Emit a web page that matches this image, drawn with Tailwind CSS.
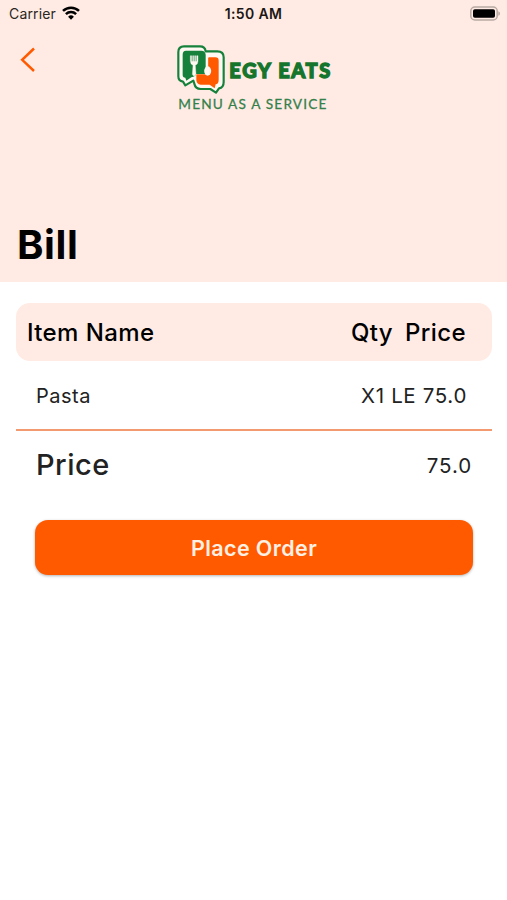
<!DOCTYPE html>
<html lang="en">
<head>
<meta charset="utf-8">
<meta name="viewport" content="width=device-width, initial-scale=1">
<title>Bill</title>
<script src="https://cdn.jsdelivr.net/npm/@tailwindcss/browser@4"></script>
</head>
<body class="h-[900px] overflow-hidden bg-white font-['Inter',sans-serif] text-black">
<header class="flex h-[282px] flex-col bg-[#ffebe4]">
  <div class="grid h-7 grid-cols-3 items-center pr-[6px] pl-[9px]">
    <div class="-mt-[1px] flex items-center gap-[6px] text-[14px] tracking-[0.15px] text-[#2b2522]">
      <span>Carrier</span>
      <svg class="-mt-[1px]" width="18" height="14" viewBox="0 0 18 14" fill="none" stroke="#000" stroke-width="2.5">
        <path d="M1 4.9a11.5 11.5 0 0 1 16 0M3.9 8.2a7.3 7.3 0 0 1 10.2 0"/>
        <path d="M9 13.7 6.1 10.8a4.1 4.1 0 0 1 5.8 0Z" fill="#000" stroke="none"/>
      </svg>
    </div>
    <div class="-mt-[2px] -ml-[3px] text-center text-[14px] font-semibold tracking-[0.35px] text-[#1c1715]">1:50 AM</div>
    <svg class="-mt-[2px] justify-self-end" width="31" height="15" viewBox="0 0 31 15">
      <rect x=".8" y="1" width="26.4" height="13" rx="4" fill="#ffebe4" stroke="#b9aaa4" stroke-width="1.5"/>
      <rect x="3" y="3.2" width="22" height="8.6" rx="1.8" fill="#000"/>
      <path d="M28.3 5.2c2.2.8 2.2 3.8 0 4.6Z" fill="#b9aaa4"/>
    </svg>
  </div>
  <div class="grid grid-cols-[173px_161px_173px] items-start pt-4">
    <svg class="mt-[3px] ml-[20px]" width="16" height="26" viewBox="0 0 16 26" fill="none" stroke="#ff5a00" stroke-width="2.5"><path d="M14 1.5 2.2 12.8 14 24"/></svg>
    <svg width="161" height="72" viewBox="9 18 483 216">
      <path d="M42 25H90Q105 25 107 40H142Q161 40 161 58V132Q161 149 147 151L138 164L121 153H92Q76 152 73 137L70 128L46 142L39 131Q25 129 25 115V42Q25 25 42 25Z" fill="#fff8f3" stroke="#16813b" stroke-width="6.5" stroke-linejoin="round"/>
      <path d="M48 38H94Q106 38 107 50V108H79Q77 115 64 118L49 128L46 119Q38 119 38 110V50Q38 38 48 38Z" fill="#16813b"/>
      <path d="M118 58H136Q146 58 146 68V125Q146 138 137 139L134 151L119 140H92Q80 139 79 127V109H111V60Z" fill="#ff5a00"/>
      <path d="M112 54V92" stroke="#fff8f3" stroke-width="5"/>
      <path d="M61 53V70Q61 79 69 82L67 109Q72 119 78 109L76 82Q84 79 84 70V53H80V70H77V53H74V70H71V53H68V70H65V53Z" fill="#fff8f3" stroke="#fff8f3" stroke-width="1"/>
      <ellipse cx="113" cy="99" rx="10.5" ry="14" fill="#fff8f3"/>
      <text x="178" y="121" textLength="303" lengthAdjust="spacing" font-family="Lato, sans-serif" font-size="60" font-weight="900" fill="#16752c" stroke="#16752c" stroke-width="4">EGY EATS</text>
      <text x="25" y="214" textLength="444" lengthAdjust="spacing" font-family="Lato, sans-serif" font-size="41" fill="#34804a" stroke="#34804a" stroke-width=".8">MENU AS A SERVICE</text>
    </svg>
  </div>
  <h1 class="mt-auto mb-[13px] ml-[17px] text-[40px] leading-[48px] font-bold tracking-[0.6px]">Bill</h1>
</header>
<main class="pt-[21px] pr-[15px] pl-[16px]">
  <div class="flex h-[58px] items-center rounded-[14px] bg-[#ffebe4] pt-[1px] pr-[26px] pl-[11px] text-[24px] font-medium tracking-[0.4px]">
    <span>Item Name</span>
    <span class="ml-auto">Qty</span>
    <span class="ml-[12px]">Price</span>
  </div>
  <div class="flex h-[70px] items-center justify-between border-b-2 border-[#f39a70] pt-[1px] pr-[25px] pl-[20px] text-[20px] text-[#222]">
    <span class="tracking-[0.5px]">Pasta</span>
    <span class="pt-[2px] text-[20.5px] tracking-[0.65px]">X1 LE 75.0</span>
  </div>
  <div class="flex h-[68px] items-center justify-between pr-[20px] pl-[20px] text-[#222]">
    <span class="text-[29px] font-medium tracking-[0.5px]">Price</span>
    <span class="pt-[3px] text-[20.5px] tracking-[0.9px]">75.0</span>
  </div>
  <button class="mt-[21px] ml-[19px] block h-[55px] w-[438px] rounded-[13px] bg-[#ff5a00] pt-[2px] text-[21.5px] font-semibold tracking-[0.4px] text-[#fff0e3] shadow-[0_1px_3px_rgba(0,0,0,0.3)]">Place Order</button>
</main>
</body>
</html>
